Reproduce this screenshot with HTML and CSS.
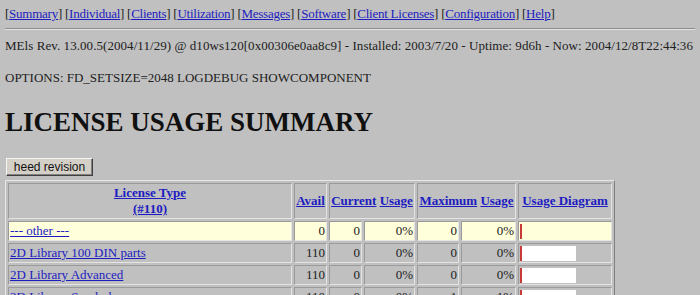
FILE: index.html
```html
<!DOCTYPE html>
<html lang="en">
<head>
    <meta charset="UTF-8">
    <title>License Usage Summary</title>
    <link rel="stylesheet" href="styles.css">
</head>
<body>
    <p class="nav">
        [<a href="#">Summary</a>] [<a href="#">Individual</a>] [<a href="#">Clients</a>] [<a href="#">Utilization</a>] [<a href="#">Messages</a>] [<a href="#">Software</a>] [<a href="#">Client Licenses</a>] [<a href="#">Configuration</a>] [<a href="#">Help</a>]
    </p>
    <hr class="rule">
    <p class="info">MEls Rev. 13.00.5(2004/11/29) @ d10ws120[0x00306e0aa8c9] - Installed: 2003/7/20 - Uptime: 9d6h - Now: 2004/12/8T22:44:36</p>
    <p class="options">OPTIONS: FD_SETSIZE=2048 LOGDEBUG SHOWCOMPONENT</p>
    <h1 class="title">LICENSE USAGE SUMMARY</h1>
    <form class="actions">
        <button type="button" class="btn">heed revision</button>
    </form>
    <table class="usage">
        <colgroup>
            <col class="c-type">
            <col class="c-avail">
            <col class="c-cur">
            <col class="c-curpct">
            <col class="c-max">
            <col class="c-maxpct">
            <col class="c-diag">
        </colgroup>
        <tr>
            <th><a href="#">License Type</a><br><a href="#">(#110)</a></th>
            <th><a href="#">Avail</a></th>
            <th colspan="2"><a href="#">Current</a> <a href="#">Usage</a></th>
            <th colspan="2"><a href="#">Maximum</a> <a href="#">Usage</a></th>
            <th><a href="#">Usage Diagram</a></th>
        </tr>
        <tr class="other">
            <td><a href="#">--- other ---</a></td>
            <td class="num">0</td>
            <td class="num">0</td>
            <td class="num">0%</td>
            <td class="num">0</td>
            <td class="num">0%</td>
            <td><div class="diagram"><span class="used"></span></div></td>
        </tr>
        <tr>
            <td><a href="#">2D Library 100 DIN parts</a></td>
            <td class="num">110</td>
            <td class="num">0</td>
            <td class="num">0%</td>
            <td class="num">0</td>
            <td class="num">0%</td>
            <td><div class="diagram"><span class="used"></span><span class="free"></span></div></td>
        </tr>
        <tr>
            <td><a href="#">2D Library Advanced</a></td>
            <td class="num">110</td>
            <td class="num">0</td>
            <td class="num">0%</td>
            <td class="num">0</td>
            <td class="num">0%</td>
            <td><div class="diagram"><span class="used"></span><span class="free"></span></div></td>
        </tr>
        <tr>
            <td><a href="#">2D Library Symbols</a></td>
            <td class="num">110</td>
            <td class="num">0</td>
            <td class="num">0%</td>
            <td class="num">1</td>
            <td class="num">1%</td>
            <td><div class="diagram"><span class="used"></span><span class="free"></span></div></td>
        </tr>
    </table>
</body>
</html>
```

FILE: styles.css
```css
body {
    margin: 0;
    padding: 6px 5px 0 5px;
    background: #c0c0c0;
    color: #202020;
    font-family: "Liberation Serif", "Times New Roman", serif;
    font-size: 13px;
    line-height: 15px;
}
a {
    color: #1c1cc0;
}
.nav {
    margin: 0;
    letter-spacing: -0.25px;
}
.rule {
    margin: 7px 0 0 0;
    height: 0;
    border: 0;
    border-top: 1px solid #8c8c8c;
    border-bottom: 1px solid #e4e4e4;
}
.info {
    margin: 8px 0 0 0;
    letter-spacing: 0.06px;
}
.options {
    margin: 17px 0 0 0;
}
.title {
    margin: 21px 0 0 0;
    font-size: 27px;
    line-height: 32px;
    color: #101010;
}
.actions {
    margin: 20px 0 0 1px;
}
.btn {
    height: 18px;
    width: 87px;
    padding: 0;
    font-family: Arial, "Liberation Sans", sans-serif;
    font-size: 12px;
    color: #111;
    background: #d4d0c8;
    border: 1px solid;
    border-color: #f4f4f4 #404040 #404040 #f4f4f4;
    box-shadow: inset -1px -1px 0 #808080;
}
.usage {
    margin-top: 4px;
    width: 610px;
    table-layout: fixed;
    border-collapse: separate;
    border-spacing: 2px;
    border: 1px solid;
    border-color: #e8e8e8 #808080 #808080 #e8e8e8;
}
.c-type { width: 284px; }
.c-avail { width: 33px; }
.c-cur { width: 33px; }
.c-curpct { width: 51px; }
.c-max { width: 42px; }
.c-maxpct { width: 55px; }
.c-diag { width: 94px; }
.usage th,
.usage td {
    box-sizing: border-box;
    padding: 1px 1px;
    border: 1px solid;
    border-color: #9a9a9a #e4e4e4 #e4e4e4 #9a9a9a;
    white-space: nowrap;
    overflow: hidden;
    line-height: 16px;
}
.usage th {
    padding: 1px 0;
}
.usage .num {
    text-align: right;
}
.usage .other td {
    background: #ffffdc;
}
.diagram {
    display: flex;
    align-items: center;
    height: 16px;
}
.diagram .used {
    width: 2px;
    height: 15px;
    background: #c83a3a;
}
.diagram .free {
    width: 54px;
    height: 15px;
    background: #ffffff;
}
```
